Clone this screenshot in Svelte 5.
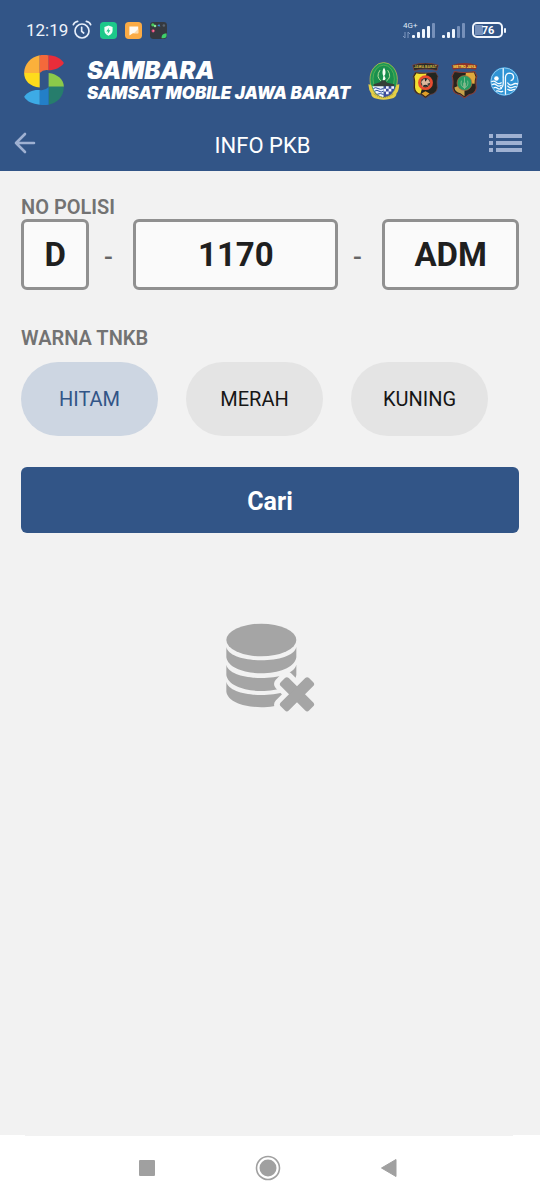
<script>
  let region = $state('D');
  let number = $state('1170');
  let suffix = $state('ADM');
  let colour = $state('HITAM');
  const colours = ['HITAM', 'MERAH', 'KUNING'];
</script>

<div class="screen">
  <header>
    <div class="status">
      <span class="time">12:19</span>
      <svg class="alarm" width="20" height="20" viewBox="0 0 60 60" fill="none" stroke="#e6eefa" stroke-width="5" stroke-linecap="round">
        <circle cx="30" cy="33" r="21" />
        <path d="M29 22v12l6 5" />
        <path d="M4 14Q8 5 17 4M56 14Q52 5 43 4" />
      </svg>
      <svg width="17" height="17" viewBox="0 0 54 54">
        <rect width="54" height="54" rx="12" fill="#1cc98a" />
        <path d="M27 11l13 5v11q0 11-13 17-13-6-13-17V16z" fill="#f4fffa" />
        <path d="M29 18l-9 12h6l-2 8 9-12h-6z" fill="#1cc98a" />
      </svg>
      <svg width="17" height="17" viewBox="0 0 54 54">
        <rect width="54" height="54" rx="12" fill="#fbab45" />
        <path d="M14 14h28v22H25l-11 7z" fill="#fffaf2" />
        <path d="M42 22v14H28z" fill="#fddcae" />
      </svg>
      <svg width="17" height="17" viewBox="0 0 54 54">
        <rect width="54" height="54" rx="11" fill="#35393f" />
        <circle cx="9" cy="9" r="5" fill="#45c95b" />
        <circle cx="16" cy="13" r="4" fill="#8be597" />
        <path d="M23 13l6-7 4 8z" fill="#3e8fd8" />
        <circle cx="44" cy="11" r="4" fill="#5a6470" />
        <circle cx="10" cy="28" r="5" fill="#e0447c" />
        <circle cx="11" cy="28" r="2" fill="#f7b9a0" />
        <path d="M37 52q-2-14 15-16 4 15-10 16z" fill="#3fd06a" />
      </svg>
      <svg class="signals" width="106" height="20" viewBox="0 0 106 20">
        <text x="1" y="8" font-size="8" font-family="Roboto, sans-serif" fill="#dfe8f5">4G+</text>
        <path d="M3 12v6M1 16l2 2M6 18v-6l2 2" stroke="#7e98c0" fill="none" />
        <g fill="#f1f6fd">
          <rect x="10" y="15" width="3" height="3" rx="1" /><rect x="15" y="12" width="3" height="6" rx="1" />
          <rect x="20" y="9" width="3" height="9" rx="1" /><rect x="25" y="6" width="3" height="12" rx="1" />
          <rect x="40" y="15" width="3" height="3" rx="1" /><rect x="45" y="12" width="3" height="6" rx="1" />
          <rect x="50" y="9" width="3" height="9" rx="1" />
        </g>
        <g fill="#7690ba">
          <rect x="30" y="3" width="3" height="15" rx="1" />
          <rect x="55" y="6" width="3" height="12" rx="1" /><rect x="60" y="3" width="3" height="15" rx="1" />
        </g>
        <rect x="73" y="5" width="8" height="10" fill="#7690ba" />
        <rect x="71" y="3" width="29" height="14" rx="4" fill="none" stroke="#f1f6fd" stroke-width="2" />
        <rect x="102" y="8" width="2" height="5" rx="1" fill="#f1f6fd" />
        <text x="86" y="14" font-size="11" font-weight="700" text-anchor="middle" font-family="Roboto, sans-serif" fill="#fff">76</text>
      </svg>
    </div>

    <div class="brand">
      <svg width="40" height="50" viewBox="0 0 120 151">
        <path d="M47 1C20 6 0 28 0 54h47z" fill="#fbb03b" />
        <path d="M0 54c0 24 18 41 47 44V54z" fill="#fedb1c" />
        <path d="M47 1q13-3 27 0v45q-16-3-27 8z" fill="#f4693b" />
        <path d="M74 1c21 1 36 9 46 23-8 14-30 22-46 22z" fill="#e92d3a" />
        <path d="M74 54c27 3 46 20 46 42H74z" fill="#8cc94a" />
        <path d="M74 96h46c0 28-19 50-46 54z" fill="#267d6c" />
        <path d="M47 150q13 2 27 0V97q-11 12-27 9z" fill="#237fc8" />
        <path d="M47 150c-22-2-39-10-47-24 10-15 29-22 47-20z" fill="#3dabe6" />
      </svg>
      <div class="names">
        <strong>SAMBARA</strong>
        <span>SAMSAT MOBILE JAWA BARAT</span>
      </div>
      <div class="emblems">
        <svg width="32" height="39" viewBox="0 0 96 116">
          <ellipse cx="47" cy="52" rx="41" ry="51" fill="#1c9a54" stroke="#d5c54a" stroke-width="2" />
          <ellipse cx="47" cy="50" rx="32" ry="41" fill="#198f4d" stroke="#6fb558" stroke-width="2" />
          <path d="M36 24q-14 20 4 33M59 24q14 20-4 33" stroke="#b4dc9a" stroke-width="3" fill="none" />
          <path d="M48 16q9 16 1 25l4 8q-3 8-9 5l2-12q-6-12 2-26z" fill="#f7fff3" />
          <path d="M17 66l19-6 6-6 10 1 5 7 22 4v8H17z" fill="#353f38" />
          <path d="M13 72h34v33Q20 98 13 72z" fill="#eef3ff" />
          <path d="M47 72h35q-5 27-35 33z" fill="#3e4c9c" />
          <path d="M16 79q7-5 14 0t17 0M20 87q7-5 13 0t14 0M28 96q9-4 19 1" stroke="#2f4fa0" stroke-width="3" fill="none" />
          <path d="M54 72h8v8h-8zM70 72h8v8h-8zM62 80h8v8h-8zM47 80h7v8h-7zM54 88h8v8h-8z" fill="#f4f6ff" />
          <path d="M1 66l8 2q7 35 38 38 31-3 39-38l8-2q-1 20-9 29 2 16-38 18-39-2-37-18-8-11-9-29z" fill="#e5cf47" />
          <path d="M17 95q30 22 60 0" fill="none" stroke="#766e31" stroke-width="2" stroke-dasharray="3 3" />
        </svg>
        <svg width="27" height="36" viewBox="0 0 80 106">
          <path d="M2 6q38-12 76 0l-4 16q-34-9-68 0z" fill="#282a29" stroke="#8d4138" stroke-width="2" />
          <text x="40" y="14" font-size="11" font-weight="700" text-anchor="middle" font-family="Roboto, sans-serif" fill="#cdb241">JAWA BARAT</text>
          <path d="M10 27q30 5 60 0l7 12q-5 12-2 34-2 18-21 20l-14 10-14-10Q7 92 5 73 8 51 3 39z" fill="#222520" stroke="#783b30" stroke-width="2" />
          <path d="M13 30q14 3 30 1L25 91Q10 86 9 72q2-20-2-32z" fill="#f3de32" />
          <circle cx="40" cy="58" r="22" fill="#e84c2f" />
          <circle cx="40" cy="58" r="14" fill="#3c3f3a" />
          <path d="M27 56l9-10 5 7 6-7 7 12-9 3 5 8-10-4-9 6-1-9z" fill="#dbb69c" />
          <path d="M33 69q7-7 14 0M40 45v9" stroke="#222" stroke-width="3" fill="none" />
          <path d="M28 90l12-7 12 7-12 9z" fill="#df9e29" />
        </svg>
        <svg width="27" height="36" viewBox="0 0 80 106">
          <path d="M2 6q38-12 76 0l-4 14q-34-8-68 0z" fill="#8e3329" />
          <text x="40" y="14" font-size="11" font-weight="700" text-anchor="middle" font-family="Roboto, sans-serif" fill="#ffe24e">METRO JAYA</text>
          <path d="M10 25q30 6 60 0l7 14q-5 12-2 34-2 18-21 20l-14 10-14-10Q7 92 5 73 8 51 3 39z" fill="#27251f" stroke="#8f3d35" stroke-width="3" />
          <path d="M44 29l24-1 5 13q-4 10-3 20L40 59z" fill="#e0a93d" />
          <path d="M40 60L10 72q2 14 18 17l12 9z" fill="#c9a34a" />
          <circle cx="40" cy="59" r="22" fill="#269b62" stroke="#bd6a40" stroke-width="2" />
          <path d="M40 42v34M31 52q-5 15 9 22 14-7 9-22" stroke="#9fcaa0" stroke-width="2" fill="none" />
          <path d="M36 58h8v14h-8z" fill="#83b78c" />
        </svg>
        <svg width="29" height="29" viewBox="0 0 90 90">
          <circle cx="45" cy="45" r="44" fill="#2f94d5" />
          <circle cx="45" cy="45" r="42" fill="none" stroke="#8cc6ec" stroke-width="3" />
          <g fill="none" stroke="#f8fcff" stroke-width="4">
            <path d="M41 4v28M48 62v24" />
            <path d="M48 62V32q1-13 13-13 13 1 12 14-1 8-9 9" />
            <path d="M41 30v22q-1 13-10 13" />
            <path d="M54 48q7 12 17 6 7-5 16-1M54 58q8 10 17 5 6-4 13-1M54 68q8 7 16 3 4-2 8-1" />
            <path d="M4 46q8-5 14 1 9 9 18 1M6 55q8-5 14 1 8 7 16 0M11 65q6-4 12 1 6 5 14 0M19 75q7-2 11 1 5 2 11-1" />
          </g>
          <circle cx="20" cy="36" r="7" fill="#fff" />
        </svg>
      </div>
    </div>

    <div class="toolbar">
      <button class="icon" aria-label="Kembali">
        <svg width="22" height="22" viewBox="0 0 22 22" fill="none" stroke="#9fb1d2" stroke-width="2.600" stroke-linecap="round" stroke-linejoin="round">
          <path d="M20 11H2M11 2l-9 9 9 9" />
        </svg>
      </button>
      <h1>INFO PKB</h1>
      <button class="icon" aria-label="Menu">
        <svg width="33" height="22" viewBox="0 0 33 22" fill="#9fb1d2">
          <path d="M0 2h4v4H0zM7 2h26v4H7zM0 9h4v4H0zM7 9h26v4H7zM0 16h4v4H0zM7 16h26v4H7z" />
        </svg>
      </button>
    </div>
  </header>

  <main>
    <label class="caption" for="region">NO POLISI</label>
    <div class="plate">
      <input id="region" bind:value={region} />
      <span>-</span>
      <input aria-label="Nomor" bind:value={number} />
      <span>-</span>
      <input aria-label="Seri" bind:value={suffix} />
    </div>

    <fieldset>
      <legend class="caption">WARNA TNKB</legend>
      <div class="pills">
        {#each colours as name}
          <label class="pill" class:active={colour === name}>
            <input type="radio" name="warna" value={name} bind:group={colour} />
            {name}
          </label>
        {/each}
      </div>
    </fieldset>

    <button class="search">Cari</button>

    <svg class="empty" width="90" height="90" viewBox="0 0 270 270" fill="#a5a5a5">
      <ellipse cx="109" cy="51" rx="105" ry="49" />
      <path d="M4 72c10 53 200 53 210 0v31c-10 64-200 64-210 0z" />
      <path d="M4 125c10 53 200 53 210 0v31c-10 64-200 64-210 0z" />
      <path d="M4 176c10 53 200 53 210 0v30c-10 62-200 62-210 0z" />
      <g transform="translate(216 214) rotate(45)">
        <g fill="#f2f2f2">
          <rect x="-76" y="-32" width="152" height="64" rx="18" />
          <rect x="-32" y="-76" width="64" height="152" rx="18" />
        </g>
        <rect x="-60" y="-17" width="120" height="34" rx="8" />
        <rect x="-17" y="-60" width="34" height="120" rx="8" />
      </g>
    </svg>
  </main>

  <nav>
    <button class="icon" aria-label="Aplikasi terbaru">
      <svg width="26" height="26" viewBox="0 0 26 26"><rect x="5" y="5" width="16" height="16" rx="1" fill="#a0a0a0" /></svg>
    </button>
    <button class="icon" aria-label="Beranda">
      <svg width="26" height="26" viewBox="0 0 26 26">
        <circle cx="13" cy="13" r="11.5" fill="none" stroke="#a0a0a0" stroke-width="1.6" />
        <circle cx="13" cy="13" r="8.5" fill="#a0a0a0" />
      </svg>
    </button>
    <button class="icon" aria-label="Kembali ke layar sebelumnya">
      <svg width="26" height="26" viewBox="0 0 26 26"><path d="M20 4.500v17L5.500 13z" fill="#a0a0a0" stroke="#a0a0a0" stroke-linejoin="round" /></svg>
    </button>
  </nav>
</div>

<style>
  :global(body) { margin: 0; }
  .screen {
    min-height: 100vh;
    display: flex;
    flex-direction: column;
    background: #f2f2f2;
    font-family: Roboto, sans-serif;
  }
  svg { display: block; flex: none; }
  button { font: inherit; border: 0; cursor: pointer; }
  .icon { display: flex; padding: 0; background: none; }

  header { background: #325587; color: #fff; }
  .status {
    display: flex;
    align-items: center;
    gap: 8px;
    height: 50px;
    padding: 10px 32px 0 26px;
    box-sizing: border-box;
  }
  .time { font-size: 17px; line-height: 20px; color: #eef3fb; }
  .alarm { margin-left: -4px; }
  .signals { margin-left: auto; }

  .brand {
    display: flex;
    align-items: center;
    height: 60px;
    padding: 0 21px 0 24px;
  }
  .names {
    display: flex;
    flex-direction: column;
    margin-left: 23px;
    padding-top: 2px;
    font-family: Inter, sans-serif;
    font-style: italic;
    font-weight: 900;
    white-space: nowrap;
  }
  .names strong { font-size: 24px; line-height: 24px; font-weight: 900; }
  .names span { font-size: 17px; line-height: 20px; }
  .emblems { display: flex; align-items: center; gap: 12px; margin-left: auto; padding-top: 2px; }

  .toolbar {
    display: grid;
    grid-template-columns: auto 1fr auto;
    align-items: center;
    height: 61px;
    padding: 5px 18px 0 14px;
    box-sizing: border-box;
  }
  h1 {
    margin: 0;
    padding-top: 6px;
    font-size: 22px;
    line-height: 26px;
    font-weight: 400;
    text-align: center;
  }

  main {
    flex: 1;
    display: flex;
    flex-direction: column;
    padding: 24px 21px 0;
  }
  .caption {
    padding: 0;
    font-size: 20px;
    line-height: 24px;
    font-weight: 600;
    color: #737373;
  }
  .plate {
    display: grid;
    grid-template-columns: 1fr 44px 3fr 44px 2fr;
    align-items: center;
  }
  .plate input {
    width: 100%;
    min-width: 0;
    height: 71px;
    box-sizing: border-box;
    padding: 0;
    border: 3px solid #909090;
    border-radius: 6px;
    background: #fafafa;
    color: #1f1f1f;
    font: 700 33px Roboto, sans-serif;
    text-align: center;
  }
  .plate span {
    padding: 4px 6px 0 0;
    text-align: center;
    font-size: 26px;
    line-height: 30px;
    font-weight: 500;
    color: #666;
  }
  fieldset { margin: 36px 0 0; padding: 0; border: 0; min-width: 0; }
  .pills { display: flex; gap: 28px; padding-top: 12px; }
  .pill {
    display: flex;
    align-items: center;
    justify-content: center;
    width: 137px;
    height: 74px;
    border-radius: 37px;
    background: #e4e4e4;
    color: #161616;
    font-size: 20px;
    line-height: 24px;
  }
  .pill input { appearance: none; width: 0; height: 0; margin: 0; }
  .active { background: #cdd6e2; color: #325587; }
  .search {
    height: 66px;
    margin-top: 31px;
    padding-top: 3px;
    border-radius: 6px;
    background: #325587;
    color: #fff;
    font-size: 25px;
    font-weight: 700;
  }
  .empty { align-self: center; margin: 90px 0; }

  nav {
    display: grid;
    grid-template-columns: repeat(3, 121px);
    justify-content: center;
    justify-items: center;
    align-items: center;
    height: 65px;
    padding-right: 4px;
    background: linear-gradient(#f2f2f2, #f2f2f2) 25px 0 / calc(100% - 52px) 1px no-repeat #fff;
  }
</style>
